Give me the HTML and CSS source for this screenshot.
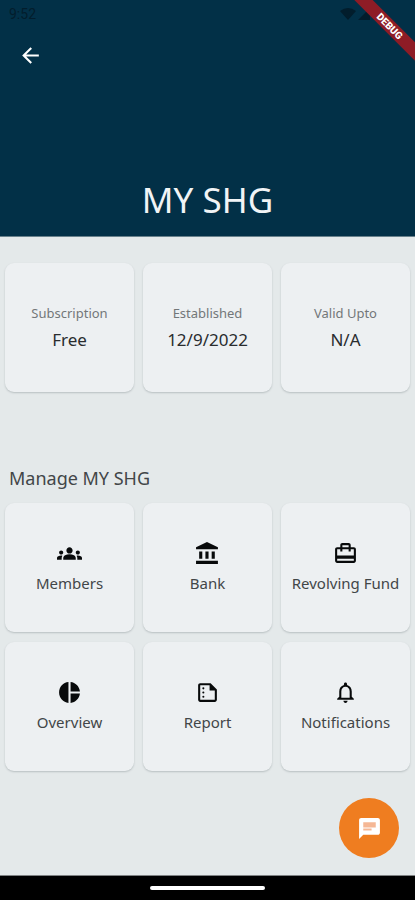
FILE: index.html
```html
<!DOCTYPE html>
<html lang="en">
<head>
<meta charset="utf-8">
<meta name="viewport" content="width=device-width, initial-scale=1">
<title>MY SHG</title>
<link rel="stylesheet" href="styles.css">
</head>
<body>
<div class="app">
  <header class="header">
    <div class="status">
      <span>9:52</span>
      <span class="status-icons">
        <svg viewBox="0 0 16 12" width="16" height="12" aria-hidden="true"><path d="M0 3Q8-3 16 3L8 12z"/></svg>
        <svg viewBox="0 0 12 12" width="12" height="12" aria-hidden="true"><path d="M12 0v12H0z"/></svg>
      </span>
    </div>
    <button class="back" type="button" aria-label="Back">
      <svg class="icon" viewBox="0 0 24 24"><path d="M20 11H7.83l5.59-5.59L12 4l-8 8 8 8 1.41-1.41L7.83 13H20v-2z"/></svg>
    </button>
    <h1 class="title">MY SHG</h1>
    <div class="ribbon-corner"><span class="ribbon">DEBUG</span></div>
  </header>
  <main class="content">
    <dl class="grid facts">
      <div class="card"><dt>Subscription</dt><dd>Free</dd></div>
      <div class="card"><dt>Established</dt><dd>12/9/2022</dd></div>
      <div class="card"><dt>Valid Upto</dt><dd>N/A</dd></div>
    </dl>
    <h2 class="section-title">Manage MY SHG</h2>
    <nav class="grid">
      <a class="card action" href="#members">
        <svg class="icon" viewBox="0 0 24 24" aria-hidden="true"><path d="M12 12.75c1.63 0 3.07.39 4.24.9 1.08.48 1.76 1.56 1.76 2.73V18H6v-1.61c0-1.18.68-2.26 1.76-2.73 1.17-.52 2.61-.91 4.24-.91zM4 13c1.1 0 2-.9 2-2s-.9-2-2-2-2 .9-2 2 .9 2 2 2zm1.13 1.1c-.37-.06-.74-.1-1.13-.1-.99 0-1.93.21-2.78.58C.48 14.9 0 15.62 0 16.43V18h4.5v-1.61c0-.83.23-1.61.63-2.29zM20 13c1.1 0 2-.9 2-2s-.9-2-2-2-2 .9-2 2 .9 2 2 2zm4 3.43c0-.81-.48-1.53-1.22-1.85-.85-.37-1.79-.58-2.78-.58-.39 0-.76.04-1.13.1.4.68.63 1.46.63 2.29V18H24v-1.57zM12 6c1.66 0 3 1.34 3 3s-1.34 3-3 3-3-1.34-3-3 1.34-3 3-3z"/></svg>
        <span>Members</span>
      </a>
      <a class="card action" href="#bank">
        <svg class="icon" viewBox="0 0 24 24" aria-hidden="true"><path d="M4 10v7h3v-7H4zm6 0v7h3v-7h-3zM1 22h21v-3H1v3zm15-12v7h3v-7h-3zM11.5 1L1 6v2h21V6l-10.500-5z"/></svg>
        <span>Bank</span>
      </a>
      <a class="card action" href="#revolving-fund">
        <svg class="icon" viewBox="0 0 24 24" aria-hidden="true"><path d="M20 6h-3V4c0-1.11-.89-2-2-2H9c-1.11 0-2 .89-2 2v2H4c-1.11 0-2 .89-2 2v11c0 1.11.89 2 2 2h16c1.11 0 2-.89 2-2V8c0-1.11-.89-2-2-2zM9 4h6v2H9V4zm11 15H4v-2h16v2zm0-5H4V8h3v2h2V8h6v2h2V8h3v6z"/></svg>
        <span>Revolving Fund</span>
      </a>
      <a class="card action" href="#overview">
        <svg class="icon" viewBox="0 0 24 24" aria-hidden="true"><path d="M11 2v20c-5.07-.5-9-4.79-9-10s3.93-9.5 9-10zm2.03 0v8.99H22c-.47-4.74-4.24-8.52-8.97-8.99zm0 11.01V22c4.74-.47 8.5-4.25 8.97-8.99h-8.97z"/></svg>
        <span>Overview</span>
      </a>
      <a class="card action" href="#report">
        <svg class="icon" viewBox="0 0 24 24" aria-hidden="true"><path d="M15 3H5c-1.1 0-1.99.9-1.99 2L3 19c0 1.1.89 2 2 2h14c1.1 0 2-.9 2-2V9l-6-6zM5 19V5h9v5h5v9H5z"/><circle cx="8" cy="8" r="1"/><circle cx="8" cy="12" r="1"/><circle cx="8" cy="16" r="1"/></svg>
        <span>Report</span>
      </a>
      <a class="card action" href="#notifications">
        <svg class="icon" viewBox="0 0 24 24" aria-hidden="true"><path d="M12 22c1.1 0 2-.9 2-2h-4c0 1.1.9 2 2 2zm6-6v-5c0-3.07-1.63-5.64-4.5-6.32V4c0-.83-.67-1.5-1.5-1.5s-1.5.67-1.5 1.5v.68C7.64 5.36 6 7.92 6 11v5l-2 2v1h16v-1l-2-2zm-2 1H8v-6c0-2.48 1.51-4.5 4-4.5s4 2.02 4 4.5v6z"/></svg>
        <span>Notifications</span>
      </a>
    </nav>
  </main>
  <button class="fab" type="button" aria-label="Chat">
    <svg class="icon" viewBox="0 0 24 24"><path fill="#f5b795" d="M5 5h14v10H5z"/><path d="M20 2H4c-1.1 0-1.99.9-1.99 2L2 22l4-4h14c1.1 0 2-.9 2-2V4c0-1.1-.9-2-2-2zM6 6h12v5H6V6zm8 8H6v-2h8v2z"/></svg>
  </button>
  <footer class="system-bar"><span class="handle"></span></footer>
</div>
</body>
</html>
```
FILE: styles.css
```css
* {
  box-sizing: border-box;
}

body {
  margin: 0;
  background: #e4e9ea;
  color: #424648;
  font-family: "Noto Sans", sans-serif;
}

.app {
  min-height: 100vh;
  display: flex;
  flex-direction: column;
}

.icon {
  display: block;
  width: 25px;
  height: 25px;
  fill: currentColor;
}

.header {
  position: relative;
  display: flex;
  flex-direction: column;
  min-height: 237px;
  background: #023047;
  border-bottom: 1px solid #68818c;
  color: #f1f4f6;
}

.status {
  display: flex;
  justify-content: space-between;
  align-items: center;
  height: 28px;
  padding: 0 45px 0 9px;
  color: #021d2c;
  font: 14px/28px Roboto, sans-serif;
}

.status-icons {
  display: flex;
  gap: 2px;
  fill: currentColor;
}

.back {
  align-self: flex-start;
  margin: 7px 10px;
  padding: 8px;
  border: 0;
  background: none;
  color: #fff;
}

.title {
  margin: auto 0 12px;
  font-size: 35px;
  line-height: 48px;
  font-weight: 400;
  text-align: center;
}

.ribbon-corner {
  position: absolute;
  top: 0;
  right: 0;
  width: 64px;
  height: 64px;
  overflow: hidden;
}

.ribbon {
  position: absolute;
  top: 19px;
  left: -12px;
  width: 100px;
  padding-left: 2px;
  background: #8e1c26;
  color: #fff;
  font: 900 10px/13px Roboto, sans-serif;
  text-align: center;
  transform: rotate(45deg);
}

.content {
  flex: 1;
  padding: 26px 5px;
}

.grid {
  display: grid;
  grid-template-columns: repeat(3, minmax(0, 1fr));
  gap: 10px 9px;
  margin: 0;
}

.card {
  display: flex;
  flex-direction: column;
  align-items: center;
  justify-content: center;
  aspect-ratio: 1;
  border-radius: 9px;
  background: #edf0f2;
  box-shadow: 0 1px 2px #b7bfc1;
  text-align: center;
}

.facts dt {
  color: #737779;
  font-size: 13px;
  line-height: 20px;
}

.facts dd {
  margin: 4px 0 0;
  color: #292c2e;
  font-size: 17px;
  line-height: 26px;
}

.section-title {
  margin: 73px 4px 12px;
  font-size: 18px;
  line-height: 26px;
  font-weight: 400;
}

.action {
  gap: 6px;
  color: #080a0b;
  font-size: 15px;
  line-height: 22px;
  text-decoration: none;
}

.action span {
  color: #424648;
}

.fab {
  position: fixed;
  right: 16px;
  bottom: 42px;
  display: grid;
  place-items: center;
  width: 60px;
  height: 60px;
  padding: 0;
  border: 0;
  border-radius: 50%;
  background: #ef7d20;
  color: #fff;
}

.system-bar {
  display: grid;
  place-items: center;
  height: 25px;
  border-top: 1px solid #7f8283;
  background: #000;
}

.handle {
  width: 115px;
  height: 4px;
  border-radius: 2px;
  background: #fff;
}
```
